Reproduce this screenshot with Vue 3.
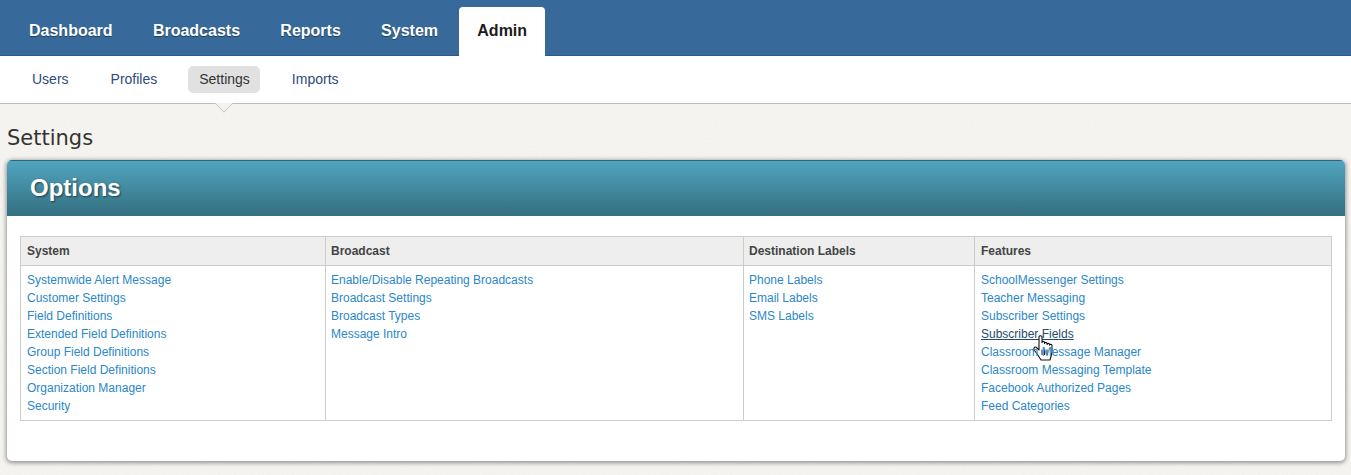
<script setup>
const tabs = [
  { label: 'Dashboard' },
  { label: 'Broadcasts' },
  { label: 'Reports' },
  { label: 'System' },
  { label: 'Admin', active: true },
]
const subs = [
  { label: 'Users' },
  { label: 'Profiles' },
  { label: 'Settings', active: true },
  { label: 'Imports' },
]
const cols = [
  { title: 'System', links: ['Systemwide Alert Message', 'Customer Settings', 'Field Definitions', 'Extended Field Definitions', 'Group Field Definitions', 'Section Field Definitions', 'Organization Manager', 'Security'] },
  { title: 'Broadcast', links: ['Enable/Disable Repeating Broadcasts', 'Broadcast Settings', 'Broadcast Types', 'Message Intro'] },
  { title: 'Destination Labels', links: ['Phone Labels', 'Email Labels', 'SMS Labels'] },
  { title: 'Features', links: ['SchoolMessenger Settings', 'Teacher Messaging', 'Subscriber Settings', 'Subscriber Fields', 'Classroom Message Manager', 'Classroom Messaging Template', 'Facebook Authorized Pages', 'Feed Categories'] },
]
</script>

<template>
  <div class="page">
    <svg class="grain" width="1351" height="475" aria-hidden="true">
      <filter id="paper">
        <feTurbulence type="fractalNoise" baseFrequency="0.75" numOctaves="2" seed="4" />
        <feColorMatrix type="matrix" values="0 0 0 0 1  0 0 0 0 1  0 0 0 0 1  0 0 0 1.6 -0.75" />
      </filter>
      <rect width="1351" height="475" filter="url(#paper)" />
    </svg>
    <div class="content">
      <nav class="topbar">
        <a v-for="t in tabs" :key="t.label" class="tab" :class="{ active: t.active }">{{ t.label }}</a>
      </nav>
      <nav class="subbar">
        <a v-for="s in subs" :key="s.label" class="sub" :class="{ active: s.active }">{{ s.label }}</a>
        <span class="notch"></span>
      </nav>
      <h1 class="title">Settings</h1>
      <section class="card">
        <header class="card-head"><h2>Options</h2></header>
        <div class="card-body">
          <div class="grid">
            <div v-for="c in cols" :key="c.title" class="col">
              <div class="col-head">{{ c.title }}</div>
              <ul class="col-links">
                <li v-for="l in c.links" :key="l">
                  <a :class="{ hover: l === 'Subscriber Fields' }">{{ l }}</a>
                  <svg v-if="l === 'Subscriber Fields'" class="cursor" width="20" height="26" viewBox="0 0 20 26">
                    <path d="M6 1.900C6 .3 9 .3 9 1.900V7.500C9 6 11.500 6 11.500 7.500V8.500C11.500 7 14 7 14 8.500V9.500C14 8 16.500 8 16.500 9.500V10.200C16.800 9 19 9 19 10.500V16.500C19 19 18 21 17 25H8C6 21.500 4 18.500 1.500 15.500C0 13.500 1.500 11 3.500 12.500L6 15Z" fill="#fff" stroke="#111" stroke-width="1.100" stroke-linejoin="round" />
                    <path d="M9 14.500V20M11.500 14.500V20M14 14.500V20" stroke="#111" stroke-width="1" fill="none" />
                  </svg>
                </li>
              </ul>
            </div>
          </div>
        </div>
      </section>
    </div>
  </div>
</template>

<style>
html, body { margin: 0; background: #f3f2ef; }
</style>

<style scoped>
.page {
  position: relative;
  height: 475px;
  overflow: hidden;
  background: #f3f2ef;
  font-family: "Liberation Sans", Arial, sans-serif;
}
.grain {
  position: absolute;
  inset: 0;
  opacity: .5;
}
.content {
  position: relative;
}
.topbar {
  height: 55px;
  background: #376a9b;
  border-bottom: 1px solid #2a5a88;
  display: flex;
  align-items: flex-end;
  padding-left: 11px;
}
.tab {
  height: 48px;
  box-sizing: border-box;
  padding: 14px 18px 0;
  margin-right: 4.3px;
  font-size: 16px;
  line-height: 19px;
  font-weight: 700;
  color: #fff;
  text-shadow: 0 1px 1px rgba(0, 0, 0, .45);
}
.tab.active {
  height: 49px;
  margin-bottom: -1px;
  margin-left: -1px;
  background: #fff;
  color: #1c1c1c;
  text-shadow: none;
  border-radius: 4px 4px 0 0;
}
.subbar {
  position: relative;
  height: 47px;
  background: #fff;
  border-bottom: 1px solid #bcbcbc;
  display: flex;
  align-items: center;
  gap: 20px;
  padding-left: 21px;
}
.sub {
  height: 27px;
  line-height: 27px;
  padding: 0 11px;
  border-radius: 5px;
  font-size: 14px;
  color: #2f4a7c;
}
.sub.active {
  padding-right: 10px;
  margin-right: 1px;
  background: #e1e1e1;
  color: #333;
}
.notch {
  position: absolute;
  left: 217px;
  top: 40px;
  width: 14px;
  height: 14px;
  box-sizing: border-box;
  background: #f3f2ef;
  border-right: 1px solid #c4c4c4;
  border-bottom: 1px solid #c4c4c4;
  clip-path: polygon(100% 0, 100% 100%, 0 100%);
  transform: rotate(45deg);
}
.title {
  margin: 0;
  padding: 21px 0 0 7px;
  height: 35px;
  font-family: "DejaVu Sans", Verdana, sans-serif;
  font-size: 21px;
  line-height: 26px;
  font-weight: 400;
  color: #333;
}
.card {
  margin: 0 6px 0 7px;
  height: 301px;
  background: #fff;
  border-radius: 5px;
  box-shadow: 0 1px 4px 1px rgba(0, 0, 0, .4);
  overflow: hidden;
}
.card-head {
  height: 56px;
  box-sizing: border-box;
  border-top: 1px solid #2f6577;
  background: linear-gradient(#50a5bf, #346f80);
  padding-left: 23px;
}
.card-head h2 {
  margin: 0;
  font-size: 24px;
  line-height: 54px;
  font-weight: 700;
  color: #fff;
  text-shadow: 1px 1px 2px rgba(0, 0, 0, .55);
}
.card-body {
  padding: 20px 13px 0;
}
.grid {
  display: grid;
  grid-template-columns: 304px 418px 231px 1fr;
  border: 1px solid #ccc;
  height: 185px;
  box-sizing: border-box;
}
.col + .col {
  border-left: 1px solid #ccc;
}
.col-head {
  height: 29px;
  box-sizing: border-box;
  background: #eee;
  border-bottom: 1px solid #ccc;
  padding: 0 5px 0 6px;
  font-size: 12px;
  line-height: 28px;
  font-weight: 700;
  color: #444;
}
.col-links {
  list-style: none;
  margin: 0;
  padding: 5px 6px 0;
}
.col-links li {
  position: relative;
  height: 18px;
  font-size: 12px;
  line-height: 18px;
  color: #2a87c9;
}
.col:nth-child(2) .col-head,
.col:nth-child(3) .col-head {
  padding-left: 5px;
}
.col:nth-child(2) .col-links,
.col:nth-child(3) .col-links {
  padding-left: 5px;
}
.hover {
  color: #1e4d6b;
  text-decoration: underline;
}
.cursor {
  position: absolute;
  left: 52px;
  top: 10px;
}
</style>
